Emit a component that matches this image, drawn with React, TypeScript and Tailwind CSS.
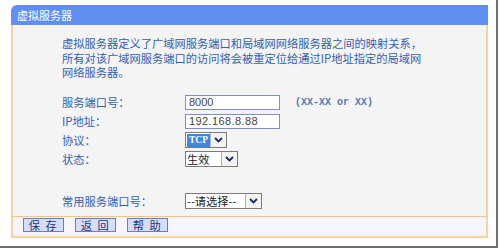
import React from "react";

const font = { fontFamily: '"Noto Sans CJK SC", "Liberation Sans", sans-serif' };

function Chevron() {
  return (
    <svg width="9" height="6" viewBox="0 0 9 6">
      <path d="M1 1 L4.5 4.5 L8 1" fill="none" stroke="#1c2a5c" strokeWidth="1.8" />
    </svg>
  );
}

function Select({ text, width, highlight }: { text: string; width: string; highlight?: boolean }) {
  return (
    <div className={`flex h-[16px] ${width} border border-[#7a7a7a] bg-white`}>
      <div className="flex flex-1 items-center pl-[1px]">
        {highlight ? (
          <span className="bg-[#3a86e0] px-[2px] text-[9.5px] leading-[13px] text-white whitespace-nowrap" style={{ fontFamily: '"Liberation Serif", serif', fontWeight: 700 }}>
            {text}
          </span>
        ) : (
          <span className="text-[11.25px] leading-[14px] text-[#222] whitespace-nowrap">{text}</span>
        )}
      </div>
      <div className="flex w-[16px] shrink-0 items-center justify-center border-l border-[#b5b5b5] bg-[#f3f3f3]">
        <Chevron />
      </div>
    </div>
  );
}

function Btn({ label }: { label: string }) {
  return (
    <div className="flex h-[14px] w-[41px] items-center justify-center border border-[#6c7fb4] bg-[#d6ddf6] text-[11.25px] leading-[12px] text-[#1d3680] whitespace-pre tracking-[1.5px]">
      {label}
    </div>
  );
}

export default function App() {
  const labelCls = "w-[123px] text-[11.25px] text-[#3260b0]";
  return (
    <div className="w-[500px] h-[249px] bg-white" style={font}>
      <div className="w-[498px] h-[248px] border-r-2 border-b-2 border-[#707070] pt-[5px] pl-[11px]">
        <div className="w-[477px]">
          <div className="h-[20px] rounded-tl-[6px] bg-[#5f8ff0] pl-[6px] flex items-center text-[11px] text-white">
            虚拟服务器
          </div>
          <div className="h-[192px] border-x-2 border-b border-x-[#fbcf9f] border-b-[#f7c08a] bg-[#f4f4f4] pt-[11px] pl-[49px]">
            <div className="text-[11.25px] leading-[14.5px] text-[#3260b0] whitespace-nowrap">
              虚拟服务器定义了广域网服务端口和局域网网络服务器之间的映射关系，
              <br />
              所有对该广域网服务端口的访问将会被重定位给通过IP地址指定的局域网
              <br />
              网络服务器。
            </div>
            <div className="mt-[13px] flex flex-col">
              <div className="flex h-[19px] items-center">
                <div className={labelCls}>服务端口号：</div>
                <div className="flex h-[15px] w-[95px] items-center border border-[#7f8fc4] bg-white pl-[3px] text-[11px] text-[#444]" style={{ fontFamily: '"Liberation Sans", sans-serif' }}>
                  8000
                </div>
                <div className="ml-[15px] text-[10px] text-[#5a78b0] whitespace-pre" style={{ fontFamily: '"Liberation Mono", monospace', fontWeight: 700 }}>
                  (XX-XX or XX)
                </div>
              </div>
              <div className="flex h-[19px] items-center">
                <div className={labelCls}>IP地址：</div>
                <div className="flex h-[15px] w-[95px] items-center border border-[#7f8fc4] bg-white pl-[3px] text-[11px] text-[#444] tracking-[0.4px]" style={{ fontFamily: '"Liberation Sans", sans-serif' }}>
                  192.168.8.88
                </div>
              </div>
              <div className="flex h-[19px] items-center">
                <div className={labelCls}>协议：</div>
                <Select text="TCP" width="w-[42px]" highlight />
              </div>
              <div className="flex h-[19px] items-center">
                <div className={labelCls}>状态：</div>
                <Select text="生效" width="w-[53px]" />
              </div>
              <div className="mt-[23px] flex h-[19px] items-center">
                <div className={labelCls}>常用服务端口号：</div>
                <Select text="--请选择--" width="w-[77px]" />
              </div>
            </div>
          </div>
          <div className="h-[21px] border-x-2 border-b-2 border-[#fbcf9f] bg-[#f4f6fc] pt-[1px] pl-[10px] flex gap-[11px]">
            <Btn label="保 存" />
            <Btn label="返 回" />
            <Btn label="帮 助" />
          </div>
        </div>
      </div>
    </div>
  );
}
